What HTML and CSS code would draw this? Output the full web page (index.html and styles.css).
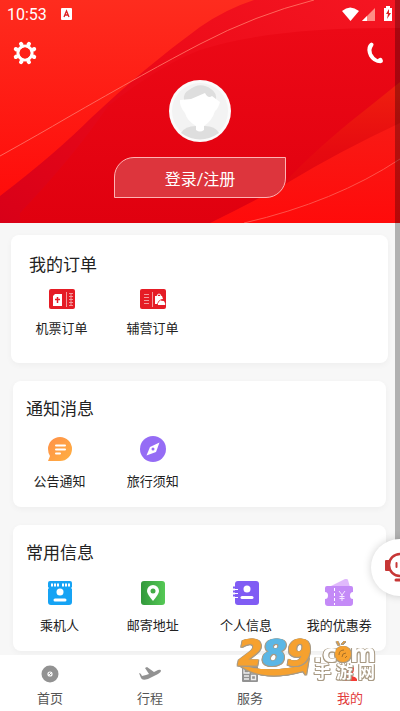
FILE: index.html
```html
<!DOCTYPE html>
<html lang="zh-CN">
<head>
<meta charset="utf-8">
<meta name="viewport" content="width=device-width, initial-scale=1">
<title>我的</title>
<link rel="stylesheet" href="styles.css">
</head>
<body>
<div class="app">
  <header class="hero">
    <svg class="hero-art" viewBox="0 0 400 223" preserveAspectRatio="none" aria-hidden="true">
      <defs>
        <linearGradient id="base" x1="0" y1="0" x2="0" y2="1"><stop offset="0" stop-color="#fe2c1e"/><stop offset="1" stop-color="#ff0808"/></linearGradient>
        <linearGradient id="band" x1="1" y1="0" x2="0" y2="1"><stop offset="0" stop-color="#f51622"/><stop offset=".45" stop-color="#ec0a18"/><stop offset="1" stop-color="#d80018"/></linearGradient>
        <linearGradient id="core" x1="0" y1="0" x2="0" y2="1"><stop offset="0" stop-color="#ec0916"/><stop offset="1" stop-color="#e0000f"/></linearGradient>
        <linearGradient id="fold" x1="0" y1="0" x2="0" y2="1"><stop offset="0" stop-color="#f0200f"/><stop offset=".5" stop-color="#e60a10"/><stop offset="1" stop-color="#e1000e"/></linearGradient>
        <linearGradient id="corner" x1="0" y1="0" x2="0" y2="1"><stop offset="0" stop-color="#f81a15"/><stop offset="1" stop-color="#ff0b0b"/></linearGradient>
      </defs>
      <path fill="url(#base)" d="M0 0H400V223H0z"/>
      <path fill="url(#band)" d="M0 196Q55 154 91 118Q145 67 200 27Q226 9 254 0H400V223H0z"/>
      <path fill="url(#core)" d="M20 213Q75 155 108 106Q160 65 200 50Q270 27 400 28V223H20z"/>
      <path fill="url(#fold)" d="M400 82Q374 103 350 122Q310 155 285 182L215 223H400z"/>
      <path fill="url(#corner)" d="M400 123Q340 151 287 183Q253 202 210 223H400z"/>
      <path fill="none" stroke="#ff665b" d="M0 156Q43 132 65 119Q150 70 200 44Q255 15 314 0"/>
      <path fill="none" stroke="#ff5149" d="M244 223Q335 202 400 159"/>
    </svg>
    <div class="status">
      <time>10:53</time>
      <svg class="status-app" viewBox="0 0 11 12" aria-hidden="true"><rect width="11" height="12" rx="1" fill="#fff"/><path d="M3 9 5.500 3 8 9M4 7h3" fill="none" stroke="#d22" stroke-width="1.300"/></svg>
      <svg class="status-signals" viewBox="0 0 52 16" aria-hidden="true">
        <path fill="#fff" d="M1 5Q9-2 18 5L9.500 15z"/>
        <path fill="#ff8d85" d="M34 2v13H21z"/><path fill="#fff" d="M26 10v5h-5z"/>
        <path fill="#fff" d="M45 0h4v2h2v13h-8V2h2z"/><path fill="#d22" d="M48 3l-3 5h2l-1 5 4-6h-2z"/>
      </svg>
    </div>
    <div class="tools">
      <button class="tool" aria-label="设置"><svg viewBox="0 0 24 24"><circle cx="12" cy="12" r="7" fill="none" stroke="#fff" stroke-width="3.200"/><g stroke="#fff" stroke-width="4" stroke-linecap="round"><path d="M8.500 3.500 8 2.800M15.500 3.500 16 2.800M8.500 20.500 8 21.200M15.500 20.500 16 21.200M3.500 8.500 2.800 8M3.500 15.500 2.800 16M20.500 8.500 21.200 8M20.500 15.500 21.200 16"/></g><circle cx="12" cy="12" r="5.400" fill="#ff2017"/></svg></button>
      <button class="tool" aria-label="电话"><svg viewBox="0 0 24 24"><path fill="#fff" d="M8.500 1.500 10 2.200Q11 3 10.300 4.500L9 7Q7.700 9 9 12.500 11 16.500 14.500 18.200L16.500 17Q18 16.300 19.200 17.700L20 20Q20 22 17.500 22.200 10 22 6.200 15.500 2.800 8.500 5.500 4 7 1.500 8.500 1.500z"/></svg></button>
    </div>
    <svg class="avatar" viewBox="0 0 62 62" aria-hidden="true">
      <circle cx="31" cy="31" r="31" fill="#fbfbfb"/><circle cx="31" cy="31" r="28" fill="#f3f3f3"/>
      <path fill="#dedede" d="M15 20Q14 13 20 10Q31 1 42 9Q48 13 47 20z"/>
      <path fill="#dedede" d="M12 53Q16 46 27 46h9Q46 46 50 53Q31 66 12 53z"/>
      <path fill="#fff" d="M11 20 22 19 36 13Q39 19 43 16L51 22Q49 29 46 31Q43 41 35 46v4q-4 3-8 0v-4Q18 41 16 33Q10 26 11 20z"/>
    </svg>
    <button class="login">登录/注册</button>
  </header>

  <main class="content">
    <section class="card orders">
      <h2>我的订单</h2>
      <div class="grid">
        <a href="#ticket"><svg viewBox="0 0 28 28" aria-hidden="true"><rect x="1" y="4" width="26" height="20" rx="2" fill="#e51c25"/><path fill="#fff" d="M7 9h7v12H5V11z"/><path stroke="#e51c25" stroke-width="1.500" d="M9.500 12v6M7 14.500h5"/><path stroke="#f29a9d" d="M18.500 7v15M21 8.500h4M21 11.500h4M21 14.500h4M21 17.500h4M21 20.500h4M23 8v13"/></svg>机票订单</a>
        <a href="#extra"><svg viewBox="0 0 28 28" aria-hidden="true"><rect x="1" y="4" width="26" height="20" rx="2" fill="#e51c25"/><path stroke="#f29a9d" d="M13.500 7v15M5 9.500h5M5 12.500h5M5 15.500h5M5 18.500h5"/><path fill="none" stroke="#fff" d="M18 12q0-3 2-3t2 3"/><path fill="#fff" d="M16 11h7l1 3q-4 0-6 5h-2z"/><path fill="#fff" d="M19 20q-1-2 1-3 1-3 3-1 2-1 3 2 1 2-1 2z"/></svg>辅营订单</a>
      </div>
    </section>
    <section class="card">
      <h2>通知消息</h2>
      <div class="grid">
        <a href="#notice"><svg viewBox="0 0 28 28" aria-hidden="true"><defs><linearGradient id="or" x2="1" y2="1"><stop stop-color="#ff9049"/><stop offset="1" stop-color="#ffb040"/></linearGradient></defs><path fill="url(#or)" d="M2 14a12 12 0 1 1 12 12H2l2-5Q2 18 2 14z"/><path stroke="#fff" stroke-width="2" stroke-linecap="round" d="M10 10.500h9M10 14.500h9M10 18.500h4"/></svg>公告通知</a>
        <a href="#travel"><svg viewBox="0 0 28 28" aria-hidden="true"><circle cx="14" cy="14" r="13" fill="#956cf5"/><path fill="#fff" d="M20.500 7.500 17 17 7.500 20.500 11 12z"/><circle cx="14" cy="14" r="1.500" fill="#956cf5"/></svg>旅行须知</a>
      </div>
    </section>
    <section class="card">
      <h2>常用信息</h2>
      <div class="grid">
        <a href="#passenger"><svg viewBox="0 0 28 28" aria-hidden="true"><path fill="#16a3f4" d="M4 2h20q2 0 2 2v4l-1 1 1 1v13q0 3-3 3H5q-3 0-3-3V10l1-1-1-1V4q0-2 2-2z"/><path stroke="#fff" stroke-width="3" stroke-dasharray="2 1" d="M5 6h8M16 6h8"/><circle cx="14" cy="13" r="3.500" fill="#fff"/><path stroke="#fff" stroke-width="3" stroke-linecap="round" d="M9 21h10"/></svg>乘机人</a>
        <a href="#address"><svg viewBox="0 0 28 28" aria-hidden="true"><defs><linearGradient id="gr" x2="1"><stop stop-color="#32983b"/><stop offset="1" stop-color="#55c955"/></linearGradient></defs><rect x="2" y="2" width="24" height="24" rx="3" fill="url(#gr)"/><path fill="#fff" d="M14 22Q8 15 8 12a6 6 0 0 1 12 0Q20 15 14 22z"/><circle cx="14" cy="12" r="2.500" fill="#43ac46"/></svg>邮寄地址</a>
        <a href="#profile"><svg viewBox="0 0 28 28" aria-hidden="true"><rect x="3" y="2" width="24" height="24" rx="3" fill="#805cf4"/><path stroke="#fff" d="M3 10.500h3M3 14.500h3M3 18.500h3"/><path stroke="#805cf4" stroke-width="2" d="M1 8.500h4M1 12.500h4M1 16.500h4"/><circle cx="15" cy="10" r="3.500" fill="#fff"/><path stroke="#fff" stroke-width="3" stroke-linecap="round" d="M10 18.500h10"/></svg>个人信息</a>
        <a href="#coupon"><svg viewBox="0 0 28 28" aria-hidden="true"><path fill="#e0b9fc" d="M4 8 20 0q2-1 3 1l2 7z"/><path fill="#c48af7" d="M2 7h24q2 0 2 2v4q-3 0-3 3.500t3 3.500v4q0 3-3 3H3q-3 0-3-3v-4q3 0 3-3.500T0 13V9q0-2 2-2z"/><path stroke="#fff" stroke-dasharray="3 2" d="M9.500 9v17"/><path fill="none" stroke="#f6e8ff" d="m14 12 3 4 3-4M17 16v6M14.500 17.500h5M14.500 19.500h5"/></svg>我的优惠券</a>
      </div>
    </section>
  </main>

  <nav class="tabs">
    <a href="#home"><svg viewBox="0 0 22 22" aria-hidden="true"><circle cx="11" cy="11" r="8.500" fill="#929292"/><circle cx="11" cy="11" r="2" fill="none" stroke="#fff" stroke-width="1.200"/><path stroke="#fff" d="m10 12 3-3"/></svg>首页</a>
    <a href="#trip"><svg viewBox="0 0 22 22" aria-hidden="true"><path fill="#929292" d="M0 10q2 0 3 3l4-1 3-1-4-6 2-1 7 5 4-2q3-1 3 1 0 1-3 3L9 16q-6 2-7-1z"/></svg>行程</a>
    <a href="#service"><svg viewBox="0 0 22 22" aria-hidden="true"><rect x="3" y="3" width="16" height="16" rx="1" fill="#929292"/><path fill="none" stroke="#eee" stroke-width="1.300" d="M5 6h5v4H5zM12 6.500h5M12 9.500h5M5 13h5M5 16h5M12.500 12.500h4v4h-4z"/></svg>服务</a>
    <a href="#mine" class="active" aria-current="page"><svg viewBox="0 0 22 22" aria-hidden="true"><path fill="#f33c35" d="M11 2q4 0 4 4 0 3-2 5v2q4 1 5 3v2H4v-2q1-2 5-3v-2Q7 9 7 6q0-4 4-4z"/></svg>我的</a>
  </nav>

  <div class="scrollbar"></div>
  <button class="helper" aria-label="客服"><svg viewBox="0 0 36 36" aria-hidden="true"><rect x="1" y="10" width="5" height="11" rx="1" fill="#c73736"/><circle cx="16" cy="15" r="11" fill="#fff" stroke="#c73736" stroke-width="2.500"/><path stroke="#c73736" stroke-width="2" stroke-linecap="round" d="M12.500 13v4M19.500 13v4"/><path stroke="#c73736" stroke-width="3" stroke-linecap="round" d="M12 30h12"/></svg></button>
  <svg class="watermark" viewBox="0 0 144 56" aria-label="289.com 手游网">
    <path d="M1 34Q26 45 64 37L63 33 73 28 70 46 67 42Q24 54 1 34z" class="swoosh outlined"/>
    <text x="2" y="36" class="digits orange outlined">2<tspan class="blue">8</tspan>9</text>
    <g class="outlined">
      <text x="77" y="33" class="domain white">.c</text>
      <text x="114" y="33" class="domain white">m</text>
      <circle cx="107" cy="25" r="8" class="swoosh"/>
      <path d="m103 16-2-4M106 15l3-3" fill="none" stroke="#f6a12f"/>
    </g>
    <path d="M103 26q0-5 5-5M106 28q0-4 4-4M109 29l2-2" fill="none" stroke="#a66f28"/>
    <text y="49" x="78 100 122" class="site white outlined">手游网</text>
  </svg>
</div>
</body>
</html>
```
FILE: styles.css
```css
* { box-sizing: border-box; }

body {
  margin: 0;
  background: #f7f7f7;
  color: #333;
  font-family: Roboto, "Noto Sans CJK SC", sans-serif;
  font-size: 13px;
}

a { color: inherit; text-decoration: none; }
button { border: 0; padding: 0; background: none; color: inherit; font: inherit; cursor: pointer; }
svg { display: block; }

.app {
  position: relative;
  display: flex;
  flex-direction: column;
  min-height: 100vh;
  overflow: hidden;
}

.hero {
  position: relative;
  display: flex;
  flex-direction: column;
  align-items: center;
  padding-bottom: 25px;
  color: #fff;
}
.hero > * { position: relative; }
.hero > .hero-art { position: absolute; inset: 0; width: 100%; height: 100%; }

.status {
  display: flex;
  align-items: center;
  width: 100%;
  height: 28px;
  padding: 0 7px;
  font-size: 16px;
}
.status-app { width: 11px; height: 12px; margin-left: 14px; }
.status-signals { width: 52px; height: 16px; margin-left: auto; }

.tools {
  display: flex;
  justify-content: space-between;
  width: 100%;
  height: 52px;
  padding: 13px;
}
.tool, .tool svg { width: 24px; height: 24px; }
.avatar { width: 62px; height: 62px; }

.login {
  width: 172px;
  height: 41px;
  margin-top: 15px;
  border: 1px solid #ffb3b3;
  border-radius: 20px 0;
  background: #dd353d;
  font-size: 16px;
}

.content {
  display: flex;
  flex: 1;
  flex-direction: column;
  gap: 18px;
  padding: 12px 14px 4px 13px;
}

.card {
  padding: 18px 0 15px;
  border-radius: 8px;
  background: #fff;
  box-shadow: 0 2px 6px #0000000a;
}
.card h2 {
  margin: 0 13px 16px;
  color: #222;
  font-size: 17px;
  font-weight: 400;
  line-height: 20px;
}
.grid { display: grid; grid-template-columns: repeat(4, 1fr); }
.grid a {
  display: flex;
  flex-direction: column;
  align-items: center;
  gap: 9px;
  color: #222;
  line-height: 20px;
  white-space: nowrap;
}
.grid svg { width: 28px; height: 28px; }

.orders { margin: 0 -2px; padding: 20px 8px 24px 5px; }
.orders h2 { margin-bottom: 10px; }
.orders .grid a { gap: 6px; }

.tabs {
  display: grid;
  grid-template-columns: repeat(4, 1fr);
  height: 56px;
  padding-top: 8px;
  background: #fff;
}
.tabs a {
  display: flex;
  flex-direction: column;
  align-items: center;
  gap: 4px;
  color: #555;
  line-height: 20px;
}
.tabs svg { width: 22px; height: 22px; }
.tabs .active { color: #e23b3b; }

.scrollbar {
  position: absolute;
  top: 0;
  right: 0;
  width: 5px;
  height: 541px;
  background: #00000048;
}

.helper {
  position: absolute;
  right: -28px;
  bottom: 115px;
  width: 57px;
  height: 57px;
  padding: 10px 13px;
  border-radius: 50%;
  background: #fff;
  box-shadow: 0 0 9px #0000002e;
}
.helper svg { width: 36px; height: 36px; }

.watermark {
  position: absolute;
  right: 20px;
  bottom: 26px;
  width: 144px;
  height: 56px;
  overflow: visible;
}
.outlined {
  filter: drop-shadow(1px 0 0 #a89a84) drop-shadow(-1px 0 0 #a89a84) drop-shadow(0 1px 0 #a89a84);
}
.orange { fill: #f6a12f; stroke: #f6a12f; }
.blue { fill: #5bb7e6; stroke: #5bb7e6; }
.swoosh { fill: #f6a12f; }
.white { fill: #fff; }
.digits { font: italic 700 35px "DejaVu Sans", sans-serif; stroke-width: 1px; }
.domain { font: 700 25px "DejaVu Sans", sans-serif; }
.site { font: 700 17px "Noto Sans CJK SC", sans-serif; }
```
